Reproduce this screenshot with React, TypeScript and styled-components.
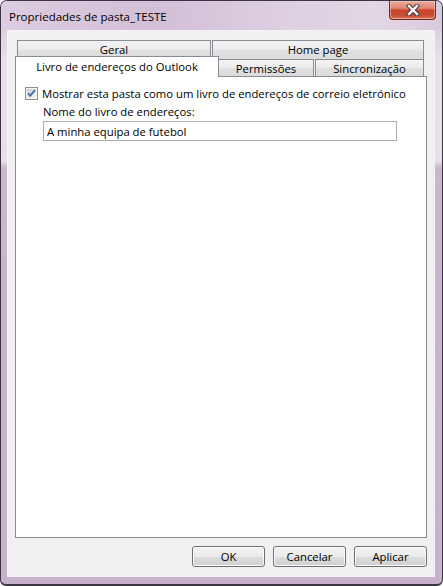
import React from 'react';
import styled, { createGlobalStyle } from 'styled-components';

const Global = createGlobalStyle`
  html, body { margin: 0; padding: 0; background: #ffffff; }
  body { font-family: "Open Sans", "Noto Sans", sans-serif; font-size: 11.3px; color: #000; }
  #root { width: 443px; height: 586px; }
`;

const Window = styled.div`
  box-sizing: border-box;
  width: 443px;
  height: 586px;
  border: 1px solid #3a3540;
  border-bottom-width: 2px;
  border-radius: 7px 7px 6px 6px;
  background: linear-gradient(
    180deg,
    #d7c6da 0px,
    #dccfdf 28px,
    #e8e1ea 60px,
    #e7dfe9 160px,
    #cbb6ce 167px,
    #c8b1cb 100%
  );
  display: flex;
  flex-direction: column;
  overflow: hidden;
`;

const TitleBar = styled.div`
  height: 29px;
  display: flex;
  align-items: flex-start;
  justify-content: space-between;
  padding: 0 6px 0 8px;
  background: linear-gradient(90deg, #dccde0 0%, #d3bfd7 35%, #ddd0e1 65%, #e2d7e5 85%, #d9c9dd 100%);
`;

const TitleText = styled.div`
  margin-top: 8px;
  line-height: 16px;
  font-size: 11.5px;
  color: #000;
`;

const CloseButton = styled.div`
  box-sizing: border-box;
  width: 47px;
  height: 19px;
  border: 1px solid #6e2a22;
  border-top: none;
  border-radius: 0 0 4px 4px;
  background: linear-gradient(180deg, #e9aa9c 0%, #de8574 40%, #c9432d 52%, #c94f36 80%, #d8745a 100%);
  box-shadow: inset 0 0 0 1px rgba(255, 220, 210, 0.5);
  display: flex;
  align-items: center;
  justify-content: center;
`;

const Client = styled.div`
  flex: 1;
  margin: 0 7px 7px 6px;
  border: 1px solid #f6f2f7;
  background: #f0f0f0;
  padding: 9px 7px 9px 7px;
  display: flex;
  flex-direction: column;
  min-height: 0;
`;

const TabStrip = styled.div`
  height: 36px;
  display: flex;
  flex-direction: column;
`;

const BackRow = styled.div`
  display: flex;
  height: 19px;
  padding-left: 2px;
  gap: 1px;
`;

const tabBg = 'linear-gradient(180deg, #f3f3f3 0%, #ececec 45%, #e0e0e0 55%, #dcdcdc 100%)';

const BackTab = styled.div<{ $w: number }>`
  box-sizing: border-box;
  width: ${p => p.$w}px;
  height: 19px;
  border: 1px solid #898c95;
  border-bottom: none;
  background: ${tabBg};
  display: flex;
  justify-content: center;
  align-items: center;
  padding-bottom: 1px;
`;

const FrontRow = styled.div`
  display: flex;
  height: 17px;
  align-items: flex-end;
`;

const FrontTab = styled.div<{ $w: number; $active?: boolean; $noLeft?: boolean; $ml?: number }>`
  box-sizing: border-box;
  position: relative;
  width: ${p => p.$w}px;
  height: ${p => (p.$active ? 21 : 17)}px;
  margin-bottom: ${p => (p.$active ? -1 : 0)}px;
  margin-left: ${p => p.$ml ?? 0}px;
  z-index: ${p => (p.$active ? 2 : 0)};
  border: 1px solid #898c95;
  border-bottom: none;
  border-left: ${p => (p.$noLeft ? 'none' : '1px solid #898c95')};
  background: ${p => (p.$active ? '#ffffff' : tabBg)};
  display: flex;
  justify-content: center;
  align-items: center;
  padding-bottom: ${p => (p.$active ? 2 : 0)}px;
`;

const Panel = styled.div`
  flex: 1;
  position: relative;
  z-index: 1;
  background: #ffffff;
  border: 1px solid #898c95;
  padding: 10px 9px;
  display: flex;
  flex-direction: column;
`;

const CheckRow = styled.div`
  display: flex;
  align-items: center;
  gap: 4px;
  height: 13px;
  line-height: 13px;
`;

const Label = styled.div`
  margin: 4px 0 0 18px;
  line-height: 16px;
`;

const TextField = styled.input`
  box-sizing: border-box;
  margin: 1px 0 0 18px;
  width: 354px;
  height: 20px;
  border: 1px solid #abadb3;
  background: #ffffff;
  padding: 0 3px;
  font-family: "Open Sans", "Noto Sans", sans-serif;
  font-size: 11.3px;
  color: #000;
  outline: none;
`;

const ButtonRow = styled.div`
  display: flex;
  justify-content: flex-end;
  gap: 8px;
  margin-top: 8px;
  height: 21px;
`;

const Button = styled.div`
  box-sizing: border-box;
  width: 73px;
  height: 21px;
  border: 1px solid #707070;
  border-radius: 3px;
  background: linear-gradient(180deg, #f2f2f2 0%, #ebebeb 50%, #dddddd 50%, #cfcfcf 100%);
  box-shadow: inset 0 0 0 1px #fbfbfb;
  display: flex;
  align-items: center;
  justify-content: center;
  padding-bottom: 1px;
`;

const CheckBox = () => (
  <svg width="13" height="13" viewBox="0 0 13 13">
    <defs>
      <linearGradient id="cbg" x1="0" y1="0" x2="1" y2="1">
        <stop offset="0" stopColor="#cbcfd5" />
        <stop offset="1" stopColor="#f6f6f6" />
      </linearGradient>
    </defs>
    <rect x="0.5" y="0.5" width="12" height="12" fill="#f4f4f4" stroke="#8e8f8f" />
    <rect x="2" y="2" width="9" height="9" fill="url(#cbg)" />
    <path d="M3.2 6.4 L5.3 8.6 L9.9 3.2" stroke="#3a5294" strokeWidth="1.9" fill="none" />
    <path d="M3.6 6.5 L5.3 8.2 L9.6 3.4" stroke="#7b9be0" strokeWidth="0.7" fill="none" />
  </svg>
);

const CloseGlyph = () => (
  <svg width="14" height="12" viewBox="0 0 14 12">
    <path d="M3 2 L11 10 M11 2 L3 10" stroke="#3b3b3b" strokeWidth="4.4" strokeLinecap="square" />
    <path d="M3 2 L11 10 M11 2 L3 10" stroke="#ffffff" strokeWidth="2.4" strokeLinecap="square" />
  </svg>
);

export default function App() {
  return (
    <>
      <Global />
      <Window>
        <TitleBar>
          <TitleText>Propriedades de pasta_TESTE</TitleText>
          <CloseButton>
            <CloseGlyph />
          </CloseButton>
        </TitleBar>
        <Client>
          <TabStrip>
            <BackRow>
              <BackTab $w={194}>Geral</BackTab>
              <BackTab $w={212}>Home page</BackTab>
            </BackRow>
            <FrontRow>
              <FrontTab $w={204} $active>Livro de endereços do Outlook</FrontTab>
              <FrontTab $w={95} $noLeft>Permissões</FrontTab>
              <FrontTab $w={109} $ml={1}>Sincronização</FrontTab>
            </FrontRow>
          </TabStrip>
          <Panel>
            <CheckRow>
              <CheckBox />
              <span>Mostrar esta pasta como um livro de endereços de correio eletrónico</span>
            </CheckRow>
            <Label>Nome do livro de endereços:</Label>
            <TextField readOnly defaultValue="A minha equipa de futebol" />
          </Panel>
          <ButtonRow>
            <Button>OK</Button>
            <Button>Cancelar</Button>
            <Button>Aplicar</Button>
          </ButtonRow>
        </Client>
      </Window>
    </>
  );
}
